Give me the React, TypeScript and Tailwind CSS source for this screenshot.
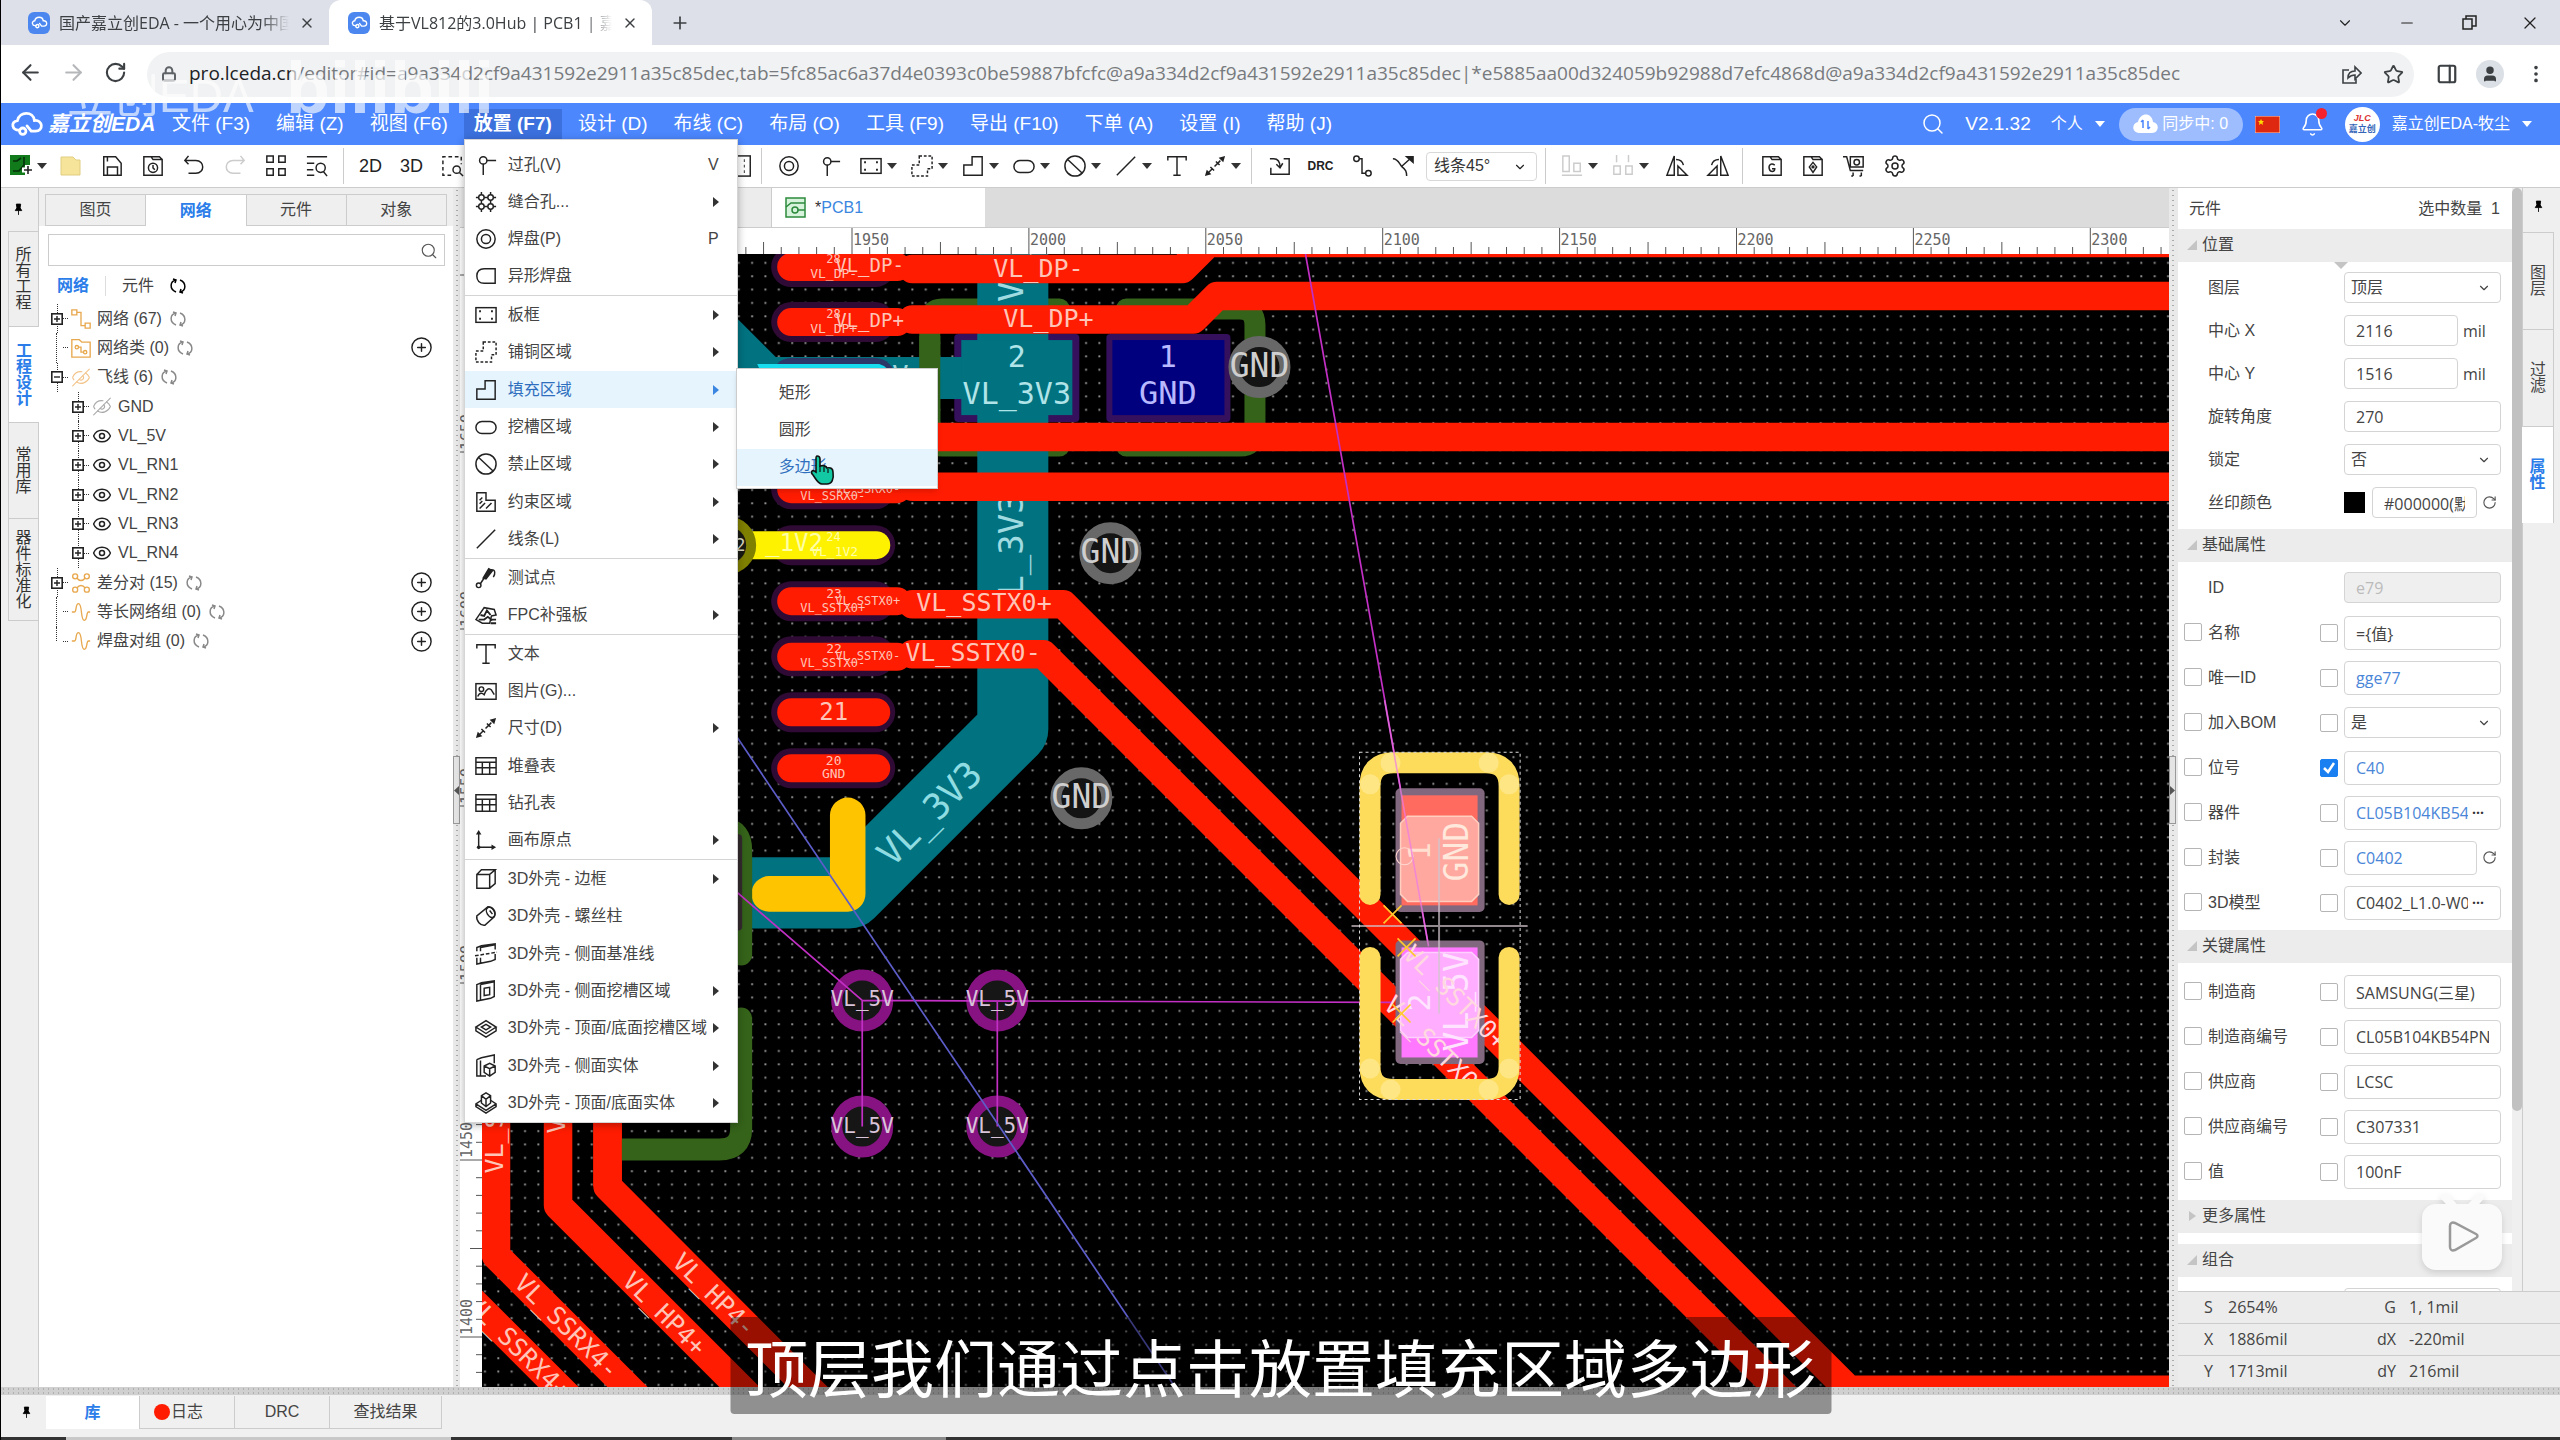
import React from "react";
import {
  ArrowLeft, ArrowRight, RotateCw, Lock, Star, X, Plus, Minus, ChevronDown, Search, Bell, MoreVertical,
  Share, PanelRight, User, Settings, CirclePlus, Eye, EyeOff,
} from "lucide-react";

const UI = "font-['Liberation_Sans','Noto_Sans_CJK_SC',sans-serif]";
const HUM = "font-['Open_Sans','Noto_Sans_CJK_SC',sans-serif]";

/* ---------- icons ---------- */

const glyphs: Record<string, React.ReactNode> = {
  via: <><circle cx="9" cy="7" r="4" /><path d="M13 7h10M9 11v12" /></>,
  stitch: <><circle cx="7" cy="7" r="3" /><circle cx="17" cy="7" r="3" /><circle cx="7" cy="17" r="3" /><circle cx="17" cy="17" r="3" /><path d="M7 1v3M17 1v3M7 10v4M17 10v4M7 20v3M17 20v3M1 7h3M1 17h3M10 7h4M10 17h4M20 7h3M20 17h3" /></>,
  pad: <><circle cx="12" cy="12" r="10" /><circle cx="12" cy="12" r="5" /></>,
  shapePad: <path d="M10 4h12v16H10C5 20 2 17 2 12s3-8 8-8z" />,
  frame: <><rect x="1" y="4" width="22" height="16" /><path d="M4.500 8h2M4.500 16h2M17.500 8h2M17.500 16h2" strokeWidth="2.200" /></>,
  copper: <path d="M9 1h14v14h-5v8H1V11h8z" strokeDasharray="3 2" />,
  fill: <path d="M11 2h11v20H2V11h9z" />,
  slot: <rect x="1" y="6" width="22" height="13" rx="6.500" />,
  forbid: <><circle cx="12" cy="12" r="11" /><path d="M4 5l16 15" /></>,
  constraint: <><path d="M12 2v8h10v12H2V2z" /><path d="M5 10l3-3M5 19l6-6M12 19l6-6M5 14l3-3" /></>,
  line: <path d="M2 22L22 2" />,
  probe: <><circle cx="4" cy="20" r="2.500" /><path d="M6 18l4-6" /><path d="M9 12l6-10 4 2-7 9z" fill="currentColor" /><path d="M17 3c6-1 5 5 3 8" /></>,
  fpc: <><path d="M1 17L10 4l11 2 2 6-5 1-2 8H8z" /><path d="M6 12l4 1 3-6 4 5M4 17h6l4-3 5 4M18 17h5M17 21h6" strokeWidth="2" /></>,
  text: <path d="M2 6V2h20v4M12 2v20M8 22h8" />,
  image: <><rect x="1" y="4" width="22" height="17" /><circle cx="7" cy="10" r="2.500" /><path d="M3 18c2-5 5-4 7-2 2-6 5-8 8-5l3 5" /></>,
  dim: <><path d="M3 21L21 3M7 13l4 4M13 7l4 4" strokeDasharray="9 3" /><path d="M1 23l2-7 5 5zM23 1l-2 7-5-5z" fill="currentColor" stroke="none" /></>,
  table: <><rect x="1" y="3" width="22" height="18" /><path d="M1 8h22M1 14h22M8 8v13M16 8v13" /></>,
  origin: <><path d="M4 3v17h17" /><path d="M1 6l3-5 3 5zM18 17l5 3-5 3z" fill="currentColor" stroke="none" /><circle cx="4" cy="20" r="2" fill="currentColor" stroke="none" /></>,
  box: <><path d="M2 7h14v15H2zM2 7l5-5h15l-6 5M22 2v15l-6 5" /></>,
  screw: <><path d="M14 2L2 12c-1 5 4 11 9 10l10-9c3-6-2-11-7-11z" /><ellipse cx="17" cy="8" rx="4" ry="6" transform="rotate(-30 17 8)" /><path d="M16 6l3 4" /></>,
  sideLine: <><path d="M2 9V5l5-2 15-2v6M2 16v7l15-3 5-2v-6M6 9V5l16-3M6 16v6" /><path d="M0 14l24-4" strokeDasharray="4 2" /></>,
  sideSlot: <><path d="M2 5l5-2 14-2v17l-4 2-15 3zM6 5l15-3M6 5v17" /><path d="M10 9l6-1v8l-6 1z" /></>,
  topSlot: <><path d="M12 4l11 7-11 7L1 11zM1 11v4l11 7 11-7v-4" /><path d="M12 8l5 3-5 3-5-3z" /></>,
  sideSolid: <><path d="M2 5l5-2 14-3v9M2 5v18h10M6 6v17" /><path d="M10 12l6-3 6 3v7l-6 4-6-4zM10 12l6 3 6-3M16 15v8" /></>,
  topSolid: <><path d="M7 9l-6 4v3l11 7 11-7v-3l-6-4M1 13l11 7 11-7" /><path d="M12 1l5 3v8l-5 4-5-4V4zM7 4l5 4 5-4M12 8v8" /></>,
  save: <path d="M3 2h13l6 7v13H3zM7 22v-9h11v9M7 2v5" />,
  history: <><path d="M2 2h8l2 3h10v17H2zM10 2h9l3 3" /><circle cx="12" cy="14" r="5" /><path d="M12 11v3l2 2" /></>,
  undo: <path d="M6 1L2 6l4 4M2 6h12c10 0 10 14 0 14H6" />,
  grid: <path d="M2 1h7v7H2zM15 1h7v7h-7zM2 15h7v7H2zM15 15h7v7h-7z" />,
  find: <><path d="M1 2h22M1 9h8M1 16h7M1 22h8" /><circle cx="16" cy="14" r="5" /><path d="M19 18l4 5" /></>,
  zoomBox: <><path d="M10 22H1V2h20v8" strokeDasharray="4 3" /><circle cx="16" cy="16" r="4" /><path d="M19 19l4 4" /></>,
  panel: <><rect x="3" y="1" width="18" height="22" /><path d="M14 6h1M14 12h1M14 18h1" strokeWidth="3" /></>,
  imp: <path d="M2 14v7h20V4h-6M1 4h4c5 0 7 3 7 9M8 10l4 4 3-5" />,
  route: <><circle cx="6" cy="4" r="3" /><circle cx="19" cy="20" r="3" /><path d="M9 4h3v16h4" /></>,
  branch: <><path d="M1 4c6 0 7 6 10 9 4 3 5 5 5 10M11 12l10-9" /><path d="M16 2h7v6z" fill="currentColor" /></>,
  alignB: <path d="M2 1h7v17H2zM14 9h7v9h-7zM1 22h22" />,
  dist: <path d="M5 0v8M18 0v8M2 12h7v9H2zM15 12h7v9h-7z" />,
  mirrorL: <path d="M9 1v21H1zM13 22h10L13 12zM11 5c5 0 7 2 8 6" />,
  mirrorR: <path d="M15 1v21h8zM11 22H1l10-10zM13 5C8 5 6 7 5 11" />,
  folderG: <><path d="M2 2h8l2 3h10v17H2zM10 2h9l3 3" /><path d="M15 11c-4-3-7 0-6 4 1 4 6 4 6 0h-3" /></>,
  folderP: <><path d="M2 2h8l2 3h10v17H2zM10 2h9l3 3" /><path d="M12 8l4 5-4 6-4-6z" /><circle cx="12" cy="13" r="1" /></>,
  cart: <><path d="M0 2h4l4 15h14M8 2h14v11H8zM9 23h2M18 23h2M11 19v4M20 19v4" /><circle cx="15" cy="8" r="3" /></>,
  net: <path d="M1 1h6v6H1zM17 17h6v6h-6zM7 4h5v16h5" />,
  netClass: <><path d="M1 2h9l3 3h10v18H1z" /><circle cx="7" cy="11" r="2" /><circle cx="17" cy="17" r="2" /><path d="M9 11h3v6h3" /></>,
  diff: <><circle cx="5" cy="4" r="3" /><circle cx="19" cy="4" r="3" /><circle cx="5" cy="20" r="3" /><circle cx="19" cy="20" r="3" /><path d="M7 6c3 4 7 4 10 0M7 18c3-4 7-4 10 0" /></>,
  wave: <path d="M1 12h3c3 0 1-10 5-10 5 0 2 20 7 20 4 0 2-10 5-10h2" />,
  pin: <path d="M8 2h8l-1 7 3 5H6l3-5zM12 14v8" fill="currentColor" />,
};

function G({ n, size = 22, className = "", w = 1.6 }: { n: string; size?: number; className?: string; w?: number }) {
  return (
    <svg width={size} height={size} viewBox="0 0 24 24" fill="none" stroke="currentColor" strokeWidth={w} overflow="visible" className={"shrink-0 " + className} aria-hidden="true">
      {glyphs[n]}
    </svg>
  );
}

function Caret({ className = "text-[#333]" }: { className?: string }) {
  return <svg width="10" height="6" viewBox="0 0 10 6" className={"shrink-0 " + className} aria-hidden="true"><path d="M0 0h10L5 6z" fill="currentColor" /></svg>;
}

function CloudMark({ className = "" }: { className?: string }) {
  return (
    <svg viewBox="0 0 32 24" fill="none" stroke="currentColor" strokeWidth="2.600" strokeLinecap="round" className={className} aria-hidden="true">
      <path d="M9 18C2 19 0 10 7 9c2-9 15-9 16 0 8-1 9 10 1 10h-4l-4-5" />
      <circle cx="12" cy="19" r="3" />
    </svg>
  );
}

function Refresh({ className = "" }: { className?: string }) {
  return (
    <svg width="16" height="16" viewBox="0 0 16 16" fill="none" stroke="currentColor" strokeWidth="1.500" className={className} aria-hidden="true">
      <path d="M6 14C-1 11 0 3 6 2M3 1l3 1-1 3M10 2c7 3 6 11 0 12M13 15l-3-1 1-3" />
    </svg>
  );
}

/* ---------- browser frame ---------- */

function BrowserTab({ title, active }: { title: string; active?: boolean }) {
  return (
    <div className={"flex h-[45px] items-center pr-3 pl-[19px] " + (active ? "w-[323px] rounded-t-xl bg-white" : "w-[320px]")}>
      <span className="flex size-[22px] shrink-0 items-center justify-center rounded-md bg-[#4c87f0]"><CloudMark className="w-[17px] text-white" /></span>
      <span className="ml-[9px] flex-1 overflow-hidden whitespace-nowrap [mask-image:linear-gradient(to_right,black_88%,transparent)]">{title}</span>
      <button aria-label="关闭标签页" className="ml-2 flex size-5 items-center justify-center"><X size={16} strokeWidth={2} /></button>
    </div>
  );
}

const URL_PATH = "/editor#id=a9a334d2cf9a431592e2911a35c85dec,tab=5fc85ac6a37d4e0393c0be59887bfcfc@a9a334d2cf9a431592e2911a35c85dec|*e5885aa00d324059b92988d7efc4868d@a9a334d2cf9a431592e2911a35c85dec";

function Browser() {
  return (
    <header className={HUM + " text-[#3c4043]"}>
      <div className="flex h-[45px] items-center bg-[#dde0e8] pl-2 text-[16px]">
        <BrowserTab title="国产嘉立创EDA - 一个用心为中国人" />
        <BrowserTab title="基于VL812的3.0Hub | PCB1 | 嘉立创" active />
        <button aria-label="新标签页" className="ml-[18px]"><Plus size={20} /></button>
        <div className="ml-auto flex h-10 items-center text-[#222]">
          <button aria-label="搜索标签页" className="flex w-[62px] justify-center"><ChevronDown size={18} strokeWidth={1.5} /></button>
          <button aria-label="最小化" className="flex w-[62px] justify-center"><Minus size={18} strokeWidth={1.5} /></button>
          <button aria-label="还原" className="flex w-[62px] justify-center">
            <svg width="15" height="15" viewBox="0 0 15 15" fill="none" stroke="currentColor" strokeWidth="1.500"><path d="M1 4h9v10H1zM4 4V1h10v10h-4" /></svg>
          </button>
          <button aria-label="关闭" className="flex w-[60px] justify-center"><X size={20} strokeWidth={1.5} /></button>
        </div>
      </div>
      <div className="flex h-[58px] items-center bg-white pb-1">
        <button aria-label="后退" className="ml-[17px] w-[43px]"><ArrowLeft size={25} strokeWidth={2} /></button>
        <button aria-label="前进" className="w-[43px] text-[#b5b7ba]"><ArrowRight size={25} strokeWidth={2} /></button>
        <button aria-label="刷新" className="w-[43px]"><RotateCw size={23} strokeWidth={2.2} /></button>
        <div className="mt-1 flex h-[45px] flex-1 items-center rounded-full bg-[#f1f2f3] pl-[14px]">
          <Lock size={16} strokeWidth={3} className="shrink-0 text-[#5f6368]" />
          <div className="ml-[12px] flex-1 overflow-hidden pb-[2px] text-[19px] whitespace-nowrap text-[#777a7e]"><span className="text-[#202124]">pro.lceda.cn</span>{URL_PATH}</div>
          <button aria-label="分享" className="flex w-[42px] justify-center">
            <svg width="21" height="21" viewBox="0 0 21 21" fill="none" stroke="currentColor" strokeWidth="1.600"><path d="M8 6H2v13h13v-4M7 14c0-5 3-7 7-7V3l6 6-6 6v-4c-3 0-5 1-7 3z" /></svg>
          </button>
          <button aria-label="收藏" className="flex w-[42px] justify-center"><Star size={21} /></button>
        </div>
        <div className="mt-1 flex items-center">
          <button aria-label="侧边栏" className="ml-[12px] flex w-[42px] justify-center"><PanelRight size={22} strokeWidth={2.4} /></button>
          <button aria-label="用户" className="mx-2 flex size-7 items-center justify-center rounded-full bg-[#dbe0e6]"><User size={18} fill="currentColor" /></button>
          <button aria-label="更多" className="flex w-12 justify-center"><MoreVertical size={22} /></button>
        </div>
      </div>
    </header>
  );
}

/* ---------- place menu ---------- */

type Item = { icon: string; label: string; key?: string; sub?: boolean; on?: boolean };
const placeGroups: { h: string; items: Item[] }[] = [
  { h: "h-[150px]", items: [
    { icon: "via", label: "过孔(V)", key: "V" }, { icon: "stitch", label: "缝合孔...", sub: true },
    { icon: "pad", label: "焊盘(P)", key: "P" }, { icon: "shapePad", label: "异形焊盘" },
  ] },
  { h: "h-[263px]", items: [
    { icon: "frame", label: "板框", sub: true }, { icon: "copper", label: "铺铜区域", sub: true },
    { icon: "fill", label: "填充区域", sub: true, on: true }, { icon: "slot", label: "挖槽区域", sub: true },
    { icon: "forbid", label: "禁止区域", sub: true }, { icon: "constraint", label: "约束区域", sub: true },
    { icon: "line", label: "线条(L)", sub: true },
  ] },
  { h: "h-[76px]", items: [{ icon: "probe", label: "测试点" }, { icon: "fpc", label: "FPC补强板", sub: true }] },
  { h: "h-[225px]", items: [
    { icon: "text", label: "文本" }, { icon: "image", label: "图片(G)..." }, { icon: "dim", label: "尺寸(D)", sub: true },
    { icon: "table", label: "堆叠表" }, { icon: "table", label: "钻孔表" }, { icon: "origin", label: "画布原点", sub: true },
  ] },
  { h: "h-[262px]", items: [
    { icon: "box", label: "3D外壳 - 边框", sub: true }, { icon: "screw", label: "3D外壳 - 螺丝柱" },
    { icon: "sideLine", label: "3D外壳 - 侧面基准线" }, { icon: "sideSlot", label: "3D外壳 - 侧面挖槽区域", sub: true },
    { icon: "topSlot", label: "3D外壳 - 顶面/底面挖槽区域", sub: true }, { icon: "sideSolid", label: "3D外壳 - 侧面实体", sub: true },
    { icon: "topSolid", label: "3D外壳 - 顶面/底面实体", sub: true },
  ] },
];

function Submenu() {
  return (
    <ul className="absolute -top-[3px] left-[271px] w-[202px] border border-[#ccc] bg-white pt-[6px] pb-[2px] text-[#444] shadow-md">
      {["矩形", "圆形", "多边形"].map((t, i) => (
        <li key={t}>
          <button className={"block h-[37px] w-full pl-[42px] text-left " + (i === 2 ? "bg-[#e6f4fd] text-[#2f6fbd]" : "")}>{t}</button>
        </li>
      ))}
      <li className="absolute top-[86px] left-[72px]" aria-hidden="true">
        <svg width="26" height="30" viewBox="0 0 26 30"><path d="M8 1c2 0 3 1 3 3v7c4-1 6 0 7 2 4-1 6 1 6 4 1 7-1 12-6 12h-5c-4 0-6-5-9-9-3-3-1-6 3-3V4c0-2 0-3 1-3z" fill="#12c9a4" stroke="#111" strokeWidth="1.600" /><path d="M11 11v6M15 12v5M19 14v4" stroke="#111" strokeWidth="1.200" /></svg>
      </li>
    </ul>
  );
}

function PlaceMenu() {
  return (
    <div className="absolute top-full left-0 z-30 w-[274px] border border-[#d5d5d5] bg-white pt-[6px] text-[16px] font-normal text-[#444] shadow-[0_2px_8px_rgba(0,0,0,0.3)]">
      {placeGroups.map((g, i) => (
        <ul key={i} className={"grid auto-rows-fr " + g.h + (i < 4 ? " border-b border-[#d4d4d4]" : "")}>
          {g.items.map((m) => (
            <li key={m.label + m.icon} className={"relative " + (m.on ? "bg-[#e6f4fd] text-[#2f6fbd]" : "")}>
              <button className="flex h-full w-full items-center pr-[18px] pl-[10px] whitespace-nowrap">
                <G n={m.icon} size={22} className="text-[#222]" />
                <span className="ml-[11px]">{m.label}</span>
                {m.key && <span className="ml-auto">{m.key}</span>}
                {m.sub && <svg width="6" height="10" viewBox="0 0 6 10" className={"ml-auto shrink-0 " + (m.on ? "text-[#3a86e0]" : "text-[#333]")}><path d="M0 0v10l6-5z" fill="currentColor" /></svg>}
              </button>
              {m.on && <Submenu />}
            </li>
          ))}
        </ul>
      ))}
    </div>
  );
}

const topMenus = ["文件 (F3)", "编辑 (Z)", "视图 (F6)", "放置 (F7)", "设计 (D)", "布线 (C)", "布局 (O)", "工具 (F9)", "导出 (F10)", "下单 (A)", "设置 (I)", "帮助 (J)"];

function MenuBar() {
  return (
    <nav className="flex h-[42px] items-center bg-[#4c87fe] text-[19px] text-white">
      <CloudMark className="ml-[9px] w-[34px]" />
      <span className="ml-1 w-[110px] text-[21px] font-bold whitespace-nowrap italic">嘉立创EDA</span>
      <ul className="ml-1 flex gap-[6px] whitespace-nowrap">
        {topMenus.map((t, i) => (
          <li key={t} className="relative">
            <button className={"h-[30px] px-[10px] " + (i === 3 ? "bg-[#3b70dd] font-bold" : "")}>{t}</button>
            {i === 3 && <PlaceMenu />}
          </li>
        ))}
      </ul>
      <div className="ml-auto flex items-center whitespace-nowrap">
        <button aria-label="搜索"><Search size={24} strokeWidth={1.5} /></button>
        <span className="ml-5">V2.1.32</span>
        <button className="ml-5 flex items-center gap-3 text-[16px]">个人 <Caret className="text-white" /></button>
        <button className="ml-[14px] flex h-[33px] w-[124px] items-center justify-center gap-1 rounded-full bg-[#9dbdff] text-[16px]">
          <svg width="25" height="20" viewBox="0 0 25 20"><path d="M6 19C-2 18-1 9 5 8 7-2 19-2 20 8c7 1 6 11-1 11z" fill="#fff" /><path d="M10 6v8M8 8l2-2M15 7v8M17 13l-2 2" stroke="#4c87fe" strokeWidth="1.500" fill="none" /></svg>
          同步中: 0
        </button>
        <svg width="25" height="17" viewBox="0 0 25 17" className="ml-3"><rect width="25" height="17" fill="#de2910" stroke="#f0d0c0" /><path d="M6 3l1 2h2L7.500 6.500 8 9 6 7.500 4 9l.5-2.500L3 5h2z" fill="#ffde00" /></svg>
        <button aria-label="通知" className="relative ml-5"><Bell size={25} strokeWidth={1.5} /><i className="absolute -top-1 right-[-2px] size-[11px] rounded-full bg-[#f5222d]" /></button>
        <span className="ml-5 flex size-[35px] flex-col items-center justify-center rounded-full bg-white text-[9px] leading-[11px] font-bold text-[#3566b8]"><i className="text-[#d33]">JLC</i>嘉立创</span>
        <button className="mr-7 ml-[12px] flex items-center gap-3 text-[16px]">嘉立创EDA-牧尘 <Caret className="text-white" /></button>
      </div>
    </nav>
  );
}

/* ---------- tool bar ---------- */

function Tool({ n, label }: { n: string; label: string }) {
  return <button aria-label={label} className="flex w-[41px] shrink-0 justify-center text-[#222]"><G n={n} /></button>;
}
function DropTool({ n, label, dim }: { n: string; label: string; dim?: boolean }) {
  return <button aria-label={label} className="flex w-[51px] shrink-0 items-center gap-[5px] pl-1"><G n={n} className={dim ? "text-[#ccc]" : "text-[#222]"} /><Caret /></button>;
}
const Bar = ({ className = "" }: { className?: string }) => <i className={"h-9 w-px shrink-0 bg-[#ccc] " + className} />;

function Toolbar() {
  return (
    <div className="flex h-[42px] shrink-0 items-center bg-white text-[#222]">
      <button aria-label="新建" className="flex w-[49px] items-center gap-[3px] pl-[9px]">
        <svg width="24" height="22" viewBox="0 0 24 22"><path d="M0 0h20v20H0z" fill="#117a1b" /><path d="M3 16h6l5-6V2M3 6h4l4-3" stroke="#04310a" fill="none" strokeWidth="1.600" /><path d="M12 15h11M17.500 10v11" stroke="#fff" strokeWidth="5" /><path d="M14 15h8M18 11v8" stroke="#222" strokeWidth="1.600" /></svg>
        <Caret />
      </button>
      <button aria-label="打开" className="flex w-[41px] justify-center"><svg width="21" height="20" viewBox="0 0 21 20"><path d="M1 1h12l3 3h4v15H1z" fill="#f6e49a" stroke="#e0cd80" /></svg></button>
      <Tool n="save" label="保存" /><Tool n="history" label="历史" /><Tool n="undo" label="撤销" />
      <button aria-label="重做" className="flex w-[41px] justify-center text-[#ccc]"><G n="undo" className="-scale-x-100" /></button>
      <Tool n="grid" label="元件库" /><Tool n="find" label="查找" />
      <Bar className="mx-[6px]" />
      <button className="w-[41px] text-[18px]">2D</button>
      <button className="w-[41px] text-[18px]">3D</button>
      <Tool n="zoomBox" label="框选缩放" />
      <div className="flex w-[288px] justify-end pr-2"><G n="panel" /></div>
      <Bar className="mr-[6px]" />
      <Tool n="pad" label="焊盘" /><Tool n="via" label="过孔" />
      <i className="w-[6px]" />
      <DropTool n="frame" label="板框" /><DropTool n="copper" label="铺铜" /><DropTool n="fill" label="填充" /><DropTool n="slot" label="挖槽" /><DropTool n="forbid" label="禁止" /><DropTool n="line" label="线条" />
      <button aria-label="文本" className="mr-2 flex w-[30px] justify-center"><G n="text" /></button>
      <DropTool n="dim" label="尺寸" />
      <Bar className="mr-[7px]" />
      <Tool n="imp" label="导入变更" />
      <button className="w-[41px] text-[12px] font-bold">DRC</button>
      <Tool n="route" label="单路布线" /><Tool n="branch" label="差分布线" />
      <div className="relative ml-[3px]">
        <select aria-label="布线拐角" className="h-[29px] w-[111px] appearance-none rounded-sm border border-[#d8d8d8] bg-white pl-[7px] text-[16px] text-[#333]"><option>线条45°</option></select>
        <ChevronDown size={14} className="pointer-events-none absolute top-2 right-[10px]" />
      </div>
      <Bar className="mr-[11px] ml-2" />
      <DropTool n="alignB" label="对齐" dim /><DropTool n="dist" label="分布" dim />
      <div className="-ml-[3px] flex"><Tool n="mirrorL" label="左旋转" /><Tool n="mirrorR" label="右旋转" /></div>
      <Bar className="mr-2 ml-1" />
      <Tool n="folderG" label="导出Gerber" /><Tool n="folderP" label="导出坐标" /><Tool n="cart" label="下单" />
      <button aria-label="设置" className="flex w-[41px] justify-center"><Settings size={24} strokeWidth={1.5} /></button>
    </div>
  );
}

/* ---------- left side ---------- */

function SideTabs() {
  const t = [["所有工程", "h-[95px]"], ["工程设计", "h-[96px]"], ["常用库", "h-[96px]"], ["器件标准化", "h-[103px]"]];
  return (
    <div className="flex w-[38px] shrink-0 flex-col border-r border-[#ccc] bg-[#efefef] pl-[7px]">
      <div className="flex h-[43px] items-center justify-center pr-[9px] text-black"><G n="pin" size={13} /></div>
      {t.map(([s, h], i) => (
        <button key={s} className={"flex items-center justify-center border-t border-l border-[#ccc] text-[16px] leading-[16px] " + h + (i === 1 ? " -mr-px bg-white font-bold text-[#2b7de9]" : " text-[#333]") + (i === 3 ? " border-b" : "")}>
          <span className="w-4 break-all">{s}</span>
        </button>
      ))}
    </div>
  );
}

type Row = { label: string; icon: string; box?: "+" | "-"; child?: boolean; add?: boolean };
const tree: Row[] = [
  { label: "网络 (67)", icon: "net", box: "+" }, { label: "网络类 (0)", icon: "netClass", add: true }, { label: "飞线 (6)", icon: "hide", box: "-" },
  { label: "GND", icon: "hideGray", box: "+", child: true }, { label: "VL_5V", icon: "eye", box: "+", child: true },
  { label: "VL_RN1", icon: "eye", box: "+", child: true }, { label: "VL_RN2", icon: "eye", box: "+", child: true },
  { label: "VL_RN3", icon: "eye", box: "+", child: true }, { label: "VL_RN4", icon: "eye", box: "+", child: true },
  { label: "差分对 (15)", icon: "diff", box: "+", add: true }, { label: "等长网络组 (0)", icon: "wave", add: true }, { label: "焊盘对组 (0)", icon: "wave", add: true },
];

function TreeIcon({ n }: { n: string }) {
  if (n === "eye") return <Eye size={22} strokeWidth={1.8} className="text-[#222]" />;
  if (n === "hide") return <EyeOff size={21} strokeWidth={1.3} className="-scale-x-100 text-[#f3c48a]" />;
  if (n === "hideGray") return <EyeOff size={21} strokeWidth={1.3} className="-scale-x-100 text-[#aaa]" />;
  return <G n={n} size={20} className="text-[#e8a84e]" />;
}

function LeftPanel() {
  return (
    <section className="flex w-[414px] shrink-0 flex-col bg-white text-[16px] text-[#444]">
      <div className="flex h-[38px] items-end bg-[#efefef] px-[6px]">
        {["图页", "网络", "元件", "对象"].map((t, i) => (
          <button key={t} className={"h-[32px] flex-1 border-t border-r border-[#ccc] " + (i === 1 ? "bg-white font-bold text-[#2b7de9]" : "border-b bg-[#efefef]") + (i === 0 ? " border-l" : "")}>{t}</button>
        ))}
      </div>
      <div className="relative mt-2 mr-[8px] ml-[9px]">
        <input aria-label="搜索网络" className="block h-[32px] w-full border border-[#ccc] px-2" />
        <Search size={18} strokeWidth={1.5} className="absolute top-2 right-[7px] text-[#555]" />
      </div>
      <div className="mt-[6px] flex h-[28px] items-center pl-[18px]">
        <button className="font-bold text-[#2b7de9]">网络</button>
        <i className="mx-4 h-5 w-px bg-[#ddd]" />
        <button>元件</button>
        <button aria-label="刷新" className="ml-4 text-black"><Refresh /></button>
      </div>
      <ul className="mt-1 grid h-[352px] auto-rows-fr">
        {tree.map((r, i) => (
          <li key={r.label} className={"flex items-center pr-[20px] " + (r.child ? "pl-[33px]" : "pl-[12px]")}>
            {r.box ? (
              <span className="relative flex h-full w-[12px] items-center justify-center before:absolute before:inset-y-0 before:left-[6px] before:border-l before:border-dotted before:border-[#333]">
                <svg width="12" height="12" viewBox="0 0 12 12" className="relative"><rect x="0.800" y="0.800" width="10.400" height="10.400" fill="#fff" stroke="#222" strokeWidth="1.600" /><path d={r.box === "+" ? "M3 6h6M6 3v6" : "M3 6h6"} stroke="#222" strokeWidth="1.400" /></svg>
              </span>
            ) : (
              <span className={"ml-[5px] w-[7px] self-start border-l border-dotted border-[#333] " + (i === 11 ? "h-[14px]" : "h-full")} />
            )}
            <span className="w-[5px] border-t border-dotted border-[#333]" />
            <button aria-label="显示" className="ml-[3px] flex w-5 shrink-0 justify-center"><TreeIcon n={r.icon} /></button>
            <span className="ml-[6px] whitespace-nowrap">{r.label}</span>
            {!r.child && <Refresh className="ml-2 text-[#888]" />}
            {r.add && <button aria-label="添加" className="ml-auto"><CirclePlus size={23} strokeWidth={1.5} className="text-[#222]" /></button>}
          </li>
        ))}
      </ul>
    </section>
  );
}

function Splitter({ dir }: { dir: "l" | "r" }) {
  return (
    <div className={"relative shrink-0 bg-[#e9e9e9] bg-[radial-gradient(#aaa_1px,transparent_1px)] bg-[size:8px_5px] " + (dir === "l" ? "w-[7px]" : "w-[9px]")}>
      <button aria-label="折叠面板" className="absolute top-[568px] flex h-[68px] w-[7px] items-center justify-center border border-[#999] bg-[#e4e4e4]">
        <svg width="5" height="9" viewBox="0 0 5 9" className={dir === "l" ? "-scale-x-100" : ""}><path d="M0 0v9l5-4.500z" fill="#555" /></svg>
      </button>
    </div>
  );
}

/* ---------- board ---------- */

const range = (a: number, b: number, s: number) => Array.from({ length: Math.floor((b - a) / s) + 1 }, (_, i) => a + i * s);

function RulerX() {
  return (
    <svg className="h-[26px] w-full bg-white font-['DejaVu_Sans_Mono',monospace] text-[15px]" stroke="#555">
      {range(1845, 2330, 5).map((v) => {
        const x = 370 + (v - 1950) * 3.538;
        return <path key={v} d={`M${x} 26V${v % 50 === 0 ? 0 : v % 25 === 0 ? 14 : 19}`} />;
      })}
      {range(1850, 2300, 50).map((v) => <text key={v} x={371 + (v - 1950) * 3.538} y="17" fill="#666" stroke="none">{v}</text>)}
    </svg>
  );
}

function RulerY() {
  return (
    <svg className="h-full w-[22px] shrink-0 bg-white font-['DejaVu_Sans_Mono',monospace] text-[15px]" stroke="#555">
      {range(1315, 1700, 5).map((v) => {
        const y = 906 + (1450 - v) * 3.54;
        return <path key={v} d={`M22 ${y}H${v % 50 === 0 ? 0 : v % 25 === 0 ? 10 : 16}`} />;
      })}
      {range(1350, 1650, 50).map((v) => {
        const y = 904 + (1450 - v) * 3.54;
        return <text key={v} x="12" y={y} transform={`rotate(-90 12 ${y})`} fill="#666" stroke="none">{v}</text>;
      })}
    </svg>
  );
}

const T = ({ x, y, s, r = 0, c = "#ffc4b8", m, children }: { x: number; y: number; s: number; r?: number; c?: string; m?: boolean; children: string }) => (
  <text x={x} y={y} fontSize={s} fill={c} transform={r ? `rotate(${r} ${x} ${y})` : undefined} textAnchor={m ? "middle" : "start"}>{children}</text>
);

function Board() {
  const padRows = [267, 322, 378, 489, 545, 601, 656, 712, 768];
  return (
    <svg className="block h-full w-full bg-black font-['DejaVu_Sans_Mono',monospace]" viewBox="483 254 1686 1133" preserveAspectRatio="xMinYMin slice" role="img" aria-label="PCB1">
      <defs>
        <pattern id="dots" x="746" y="282.600" width="13.350" height="13.350" patternUnits="userSpaceOnUse"><rect x="6" y="6" width="1.900" height="1.900" fill="#979797" /></pattern>
      </defs>
      <rect x="483" y="254" width="1686" height="1133" fill="url(#dots)" />

      <g fill="none" stroke="#35631a" strokeWidth="21" strokeLinecap="round">
        <path d="M1060 309H943Q930.500 309 930.500 322V433Q930.500 446 943 446H1060" />
        <path d="M1127 309H1240Q1255.500 309 1255.500 325V430Q1255.500 446 1240 446H1127" />
      </g>
      <rect x="955" y="334" width="125" height="88" rx="4" fill="#35105c" />
      <rect x="1107" y="334" width="124" height="88" rx="4" fill="#35105c" />
      <rect x="1113" y="340" width="112" height="75" fill="#00007e" />
      <g fill="none" stroke="#007280">
        <path d="M1013.500 250V729L850 892.500H730" strokeWidth="71" strokeLinejoin="round" />
        <path d="M720 330L768 378H965" strokeWidth="42" />
      </g>
      <rect x="962" y="340" width="111" height="75" fill="#007280" />
      <path d="M930.500 336V446" stroke="#35631a" strokeWidth="21" />

      {padRows.map((y) => <rect key={y} x="772" y={y - 20} width="124" height="40" rx="20" fill={y === 378 ? "#2b3868" : "#2f0a35"} />)}
      <path d="M758 364H880q11 3 11 14H765z" fill="#16dcee" />
      <T x={1024} y={616} s={34} r={-90} c="#9fdbe0">VL_3V3</T>
      <T x={1024} y={302} s={34} r={-90} c="#9fdbe0">VL_3V3</T>
      <T x={939} y={822} s={36} r={-45} c="#8fdde2" m>VL_3V3</T>
      <T x={893} y={385} s={27} c="#9fdbe0">V</T>

      <g fill="none" stroke="#ff1c00" strokeLinejoin="round" strokeLinecap="round">
        <path d="M792 267H898M792 322H898M792 489H898M792 601H898M792 656.500H898" strokeWidth="28" />
        <path d="M792 712H877M792 768H877" strokeWidth="28" />
        <g strokeWidth="28.500">
          <path d="M913 269H1183L1209 243H2180" />
          <path d="M913 319.500H1194L1217.500 296H2180" />
          <path d="M913 437H2180M913 486.500H2180" />
          <path d="M913 604H1064L1849 1389H2180" />
          <path d="M913 654H1044L1790 1400" />
          <path d="M497 1100V1255L640 1398M559 1100V1205L754 1400M608.500 1100V1186L822 1400M465 1292L575 1402" />
        </g>
      </g>
      <path d="M740 545H877" stroke="#fff200" strokeWidth="28" strokeLinecap="round" />
      <circle cx="728" cy="545" r="24" fill="#1a1a14" stroke="#808000" strokeWidth="10" />
      <T x={726} y={551} s={17} c="#d8d8c0">V2</T>
      <T x={766} y={551} s={24} c="#ffffa8">_1V2</T>
      <T x={827} y={541} s={12} c="#ffffa8">24</T>
      <T x={812} y={556} s={13} c="#ffffa8">VL_1V2</T>

      {[[267, "28", "VL_DP-"], [322, "28", "VL_DP+"]].map(([y, a, b]) => (
        <g key={b}><T x={827} y={Number(y) - 4} s={12}>{String(a)}</T><T x={811} y={Number(y) + 11} s={13}>{String(b)}</T><T x={836} y={Number(y) + 5} s={19}>{String(b)}</T></g>
      ))}
      {[[489, "25", "VL_SSRX0-"], [601, "23", "VL_SSTX0+"], [656, "22", "VL_SSTX0-"]].map(([y, a, b]) => (
        <g key={b}><T x={827} y={Number(y) - 3} s={13}>{String(a)}</T><T x={801} y={Number(y) + 11} s={12}>{String(b)}</T><T x={836} y={Number(y) + 4} s={12}>{String(b)}</T></g>
      ))}
      <T x={834.5} y={720} s={24} m>21</T>
      <T x={834.5} y={765} s={13} m>20</T><T x={834.5} y={778} s={13} m>GND</T>
      <T x={994} y={277} s={25}>VL_DP-</T><T x={1004} y={327} s={25}>VL_DP+</T>
      <T x={917} y={611} s={25}>VL_SSTX0+</T><T x={906} y={661} s={25}>VL_SSTX0-</T>

      <T x={1017.5} y={367} s={30} c="#b0e4e8" m>2</T><T x={1017.5} y={404} s={30} c="#b0e4e8" m>VL_3V3</T>
      <T x={1168.5} y={367} s={30} c="#b8b8ff" m>1</T><T x={1168.5} y={404} s={32} c="#b8b8ff" m>GND</T>

      <T x={504} y={1173} s={25} r={-90}>VL_SSRX4-</T><T x={566} y={1133} s={25} r={-90}>VL_HP4+</T>
      <T x={514} y={1284} s={25} r={45}>VL_SSRX4-</T><T x={622} y={1282} s={25} r={45}>VL_HP4+</T>
      <T x={672} y={1263} s={25} r={45}>VL_HP4-</T><T x={465} y={1305} s={25} r={45}>VL_SSRX4+</T>

      <path d="M848.500 815V893.500H770" fill="none" stroke="#ffc400" strokeWidth="35.500" strokeLinecap="round" strokeLinejoin="round" />
      <rect x="690" y="822" width="53" height="110" rx="8" fill="#332b2e" />
      <path d="M725 829Q742 829 742 850V954M623 1149H720Q742 1149 742 1128V1018" fill="none" stroke="#35631a" strokeWidth="22" strokeLinecap="round" />
      <path d="M608.500 1120V1186" stroke="#ff1c00" strokeWidth="28.500" />
      <rect x="733" y="834" width="10" height="96" rx="4" fill="#332b2e" />

      {[[1260, 367], [1111, 553], [1082, 798]].map(([x, y]) => (
        <g key={x}><circle cx={x} cy={y} r="25.500" fill="#141414" stroke="#686868" strokeWidth="11" /><T x={x} y={y + 10} s={33} c="#cfcfcf" m>GND</T></g>
      ))}

      {[[863, 1000], [998, 1000], [863, 1126], [998, 1126]].map(([x, y]) => (
        <circle key={`${x}-${y}`} cx={x} cy={y} r="25.500" fill="#161616" stroke="#861381" strokeWidth="11" />
      ))}
      <g fill="none" strokeWidth="1.700">
        <path d="M738 892L863 1000L1392 1002M863 1000V1126M998 1000V1126M1306 254L1429 946" stroke="#c22fc4" />
        <path d="M738 737L1176 1387" stroke="#5d5dca" />
      </g>
      {[[863, 1000], [998, 1000], [863, 1126], [998, 1126]].map(([x, y]) => <T key={`${x}-${y}`} x={x} y={y + 6} s={21} c="#d9c4d9" m>VL_5V</T>)}

      {[[788, 795, 816, "#ff6b5f", "#ffa8a0", "#ffcfc0", 0], [940, 947, 952, "#ff78ff", "#ffadff", "#ffd0ff", 1]].map(([b, i, l, c1, c2, c3, k]) => (
        <g key={Number(k)}>
          <rect x="1396" y={Number(b)} width="89" height="123.500" rx="5" fill="#82687f" />
          <rect x="1402" y={Number(i)} width="76" height="110" fill={String(c1)} />
          <path d={`M1408 ${l}h64l7 7v71l-7 7h-64l-7-7v-71z`} fill={String(c2)} stroke={String(c3)} strokeWidth="1.500" />
        </g>
      ))}
      <T x={1430} y={860} s={30} r={-90} c="#ffe0d0">1</T><T x={1468} y={881} s={33} r={-90} c="#ffe8dc">GND</T>
      <circle cx="1405" cy="856" r="8.500" fill="none" stroke="#ffd8d0" />
      <T x={1430} y={1011} s={30} r={-90} c="#ffe4ff">2</T><T x={1468} y={1051} s={33} r={-90} c="#ffe4ff">VL_5V</T>
      <T x={1402} y={955} s={25} r={45} c="#ffd8e0">VL_SSTX0+</T><T x={1383} y={1006} s={25} r={45} c="#ffd8e0">VL_SSTX0-</T>
      <g fill="none" stroke="#fddc5c" strokeWidth="21" strokeLinecap="round">
        <path d="M1370.500 894V786Q1370.500 762.500 1394 762.500H1486Q1509.500 762.500 1509.500 786V894" />
        <path d="M1370.500 957V1066Q1370.500 1089 1394 1089H1486Q1509.500 1089 1509.500 1066V957" />
      </g>
      {[[1391, 762.5], [1489, 762.5], [1370.5, 784], [1509.5, 784], [1391, 1089], [1489, 1089], [1370.5, 1068], [1509.5, 1068]].map(([x, y]) => <circle key={`${x},${y}`} cx={x} cy={y} r="10" fill="#ffe98f" opacity="0.800" />)}
      <path d="M1384 905l18 18M1402 905l-18 18M1398 938l18 18M1416 938l-18 18M1393 1004l18 18M1411 1004l-18 18" stroke="#ffc92e" strokeWidth="1.600" />
      <path d="M1352 925.500H1528M1439.500 838V1013" stroke="#d0c4cc" strokeWidth="2" opacity="0.700" />
      <path d="M1385 700L1429 946" stroke="#f07ae8" strokeWidth="1.600" opacity="0.700" />
      <rect x="1360" y="752" width="160.500" height="347" fill="none" stroke="#ddd" strokeDasharray="3 3" />
    </svg>
  );
}

function Editor() {
  return (
    <main className="flex min-w-0 flex-1 flex-col">
      <div className="flex h-[40px] shrink-0 border-b border-[#ccc] bg-[#dcdcdc]">
        <div className="w-[312px] border-r border-[#ccc] bg-[#ececec]" />
        <button className="flex w-[213px] items-center bg-white pl-[13px] text-[16px] text-[#3a86e0]">
          <svg width="21" height="21" viewBox="0 0 21 21" fill="#d8f3dc" stroke="#2c8a3c" strokeWidth="1.500"><rect x="1" y="1" width="19" height="19" /><path d="M1 10l5-4h14M13 13h7" fill="none" /><circle cx="10" cy="13" r="3" /></svg>
          <span className="ml-[9px]"><span className="text-[#333]">*</span>PCB1</span>
        </button>
      </div>
      <div className="flex h-[26px] shrink-0"><i className="w-[22px] shrink-0 bg-white" /><RulerX /></div>
      <div className="flex min-h-0 flex-1"><RulerY /><div className="min-w-0 flex-1"><Board /></div></div>
    </main>
  );
}

/* ---------- properties ---------- */

const field = "h-full w-full min-w-0 rounded-sm border border-[#d4d4d4] bg-white text-[16px]";
const tick = "size-[18px] shrink-0 appearance-none rounded-xs border border-[#b5b5b5] bg-white";

type Prop = { label: string; value: string; kind?: "select" | "unit" | "color" | "off" | "more" | "reload"; boxes?: boolean; blue?: boolean; checked?: boolean };
const place: Prop[] = [
  { label: "图层", value: "顶层", kind: "select" }, { label: "中心 X", value: "2116", kind: "unit" }, { label: "中心 Y", value: "1516", kind: "unit" },
  { label: "旋转角度", value: "270" }, { label: "锁定", value: "否", kind: "select" }, { label: "丝印颜色", value: "#000000(默认)", kind: "color" },
];
const basic: Prop[] = [
  { label: "ID", value: "e79", kind: "off" }, { label: "名称", value: "={值}", boxes: true }, { label: "唯一ID", value: "gge77", boxes: true, blue: true },
  { label: "加入BOM", value: "是", kind: "select", boxes: true }, { label: "位号", value: "C40", boxes: true, blue: true, checked: true },
  { label: "器件", value: "CL05B104KB54PNC", kind: "more", boxes: true, blue: true }, { label: "封装", value: "C0402", kind: "reload", boxes: true, blue: true },
  { label: "3D模型", value: "C0402_L1.0-W0.5", kind: "more", boxes: true },
];
const keyProps: Prop[] = [
  { label: "制造商", value: "SAMSUNG(三星)", boxes: true }, { label: "制造商编号", value: "CL05B104KB54PNC", boxes: true }, { label: "供应商", value: "LCSC", boxes: true },
  { label: "供应商编号", value: "C307331", boxes: true }, { label: "值", value: "100nF", boxes: true },
];

function PropRow({ p, h, fh }: { p: Prop; h: string; fh: string }) {
  const id = React.useId();
  const tone = p.blue ? "text-[#4a86d8]" : "text-[#444]";
  const short = p.kind === "reload" || p.kind === "color";
  return (
    <div className={"flex items-center pl-[6px] " + h}>
      <span className="w-6 shrink-0">{p.boxes && <input type="checkbox" aria-label={p.label + "显示名称"} className={tick + " mt-[5px]"} />}</span>
      <label htmlFor={id} className="w-[112px] shrink-0 whitespace-nowrap">{p.label}</label>
      <span className="flex w-6 shrink-0 items-center">
        {p.boxes && (
          <span className="relative flex">
            <input type="checkbox" aria-label={p.label + "显示值"} defaultChecked={p.checked} className={tick + " checked:border-[#1a7ff0] checked:bg-[#1a7ff0]"} />
            {p.checked && <svg width="18" height="18" viewBox="0 0 18 18" fill="none" stroke="#fff" strokeWidth="2.500" className="pointer-events-none absolute"><path d="M4 9l4 4 6-9" /></svg>}
          </span>
        )}
      </span>
      <div className={"relative flex w-[157px] items-center " + (p.kind === "select" ? UI : HUM) + " " + fh}>
        {p.kind === "color" && <i className="mr-[7px] size-[21px] shrink-0 bg-black" />}
        {p.kind === "select" ? (
          <>
            <select id={id} className={field + " appearance-none pl-[6px]"}><option>{p.value}</option></select>
            <ChevronDown size={14} className="pointer-events-none absolute right-[10px]" />
          </>
        ) : (
          <input id={id} defaultValue={p.value} disabled={p.kind === "off"} className={field + " pl-[11px] " + tone + (p.kind === "more" ? " pr-8" : " pr-[11px]") + " disabled:bg-[#efefef] disabled:text-[#bbb]"} />
        )}
        {p.kind === "more" && <button aria-label="选择" className="absolute right-[17px] text-[14px] leading-none font-bold text-[#333]">···</button>}
        {p.kind === "unit" && <span className="w-[43px] shrink-0 pl-[5px]">mil</span>}
        {short && <button aria-label="重置" className="flex w-[24px] shrink-0 justify-center text-[#555]"><RotateCw size={15} strokeWidth={1.8} /></button>}
      </div>
    </div>
  );
}

function Head({ t, closed }: { t: string; closed?: boolean }) {
  return (
    <button className="flex h-[33px] w-full items-center gap-[5px] bg-[#ececec] pb-[2px] pl-[9px]">
      <svg width="10" height="10" viewBox="0 0 10 10"><path d={closed ? "M2 0v10l7-5z" : "M10 0v10H0z"} fill="#c4c4c4" /></svg>{t}
    </button>
  );
}

function Properties() {
  return (
    <section className="flex w-[382px] shrink-0 flex-col bg-[#efefef] text-[16px] text-[#444]">
      <div className="flex min-h-0 flex-1">
        <div className="w-[334px] overflow-hidden bg-white">
          <div className="flex h-[41px] items-center justify-between pr-3 pl-[11px]"><span>元件</span><span>选中数量&nbsp; 1</span></div>
          <Head t="位置" />
          <div className="relative pt-1 pb-[5px]">
            <svg width="14" height="7" viewBox="0 0 14 7" className="absolute top-0 left-[156px]"><path d="M0 0h14L7 7z" fill="#c4c4c4" /></svg>
            {place.map((p) => <PropRow key={p.label} p={p} h="h-[43px]" fh="h-[31px]" />)}
          </div>
          <Head t="基础属性" />
          <div className="pt-[3px] pb-[5px]">{basic.map((p) => <PropRow key={p.label} p={p} h="h-[45px]" fh={p.kind === "select" || p.kind === "off" ? "h-[31px]" : "h-[34px]"} />)}</div>
          <Head t="关键属性" />
          <div className="py-[6px]">{keyProps.map((p) => <PropRow key={p.label} p={p} h="h-[45px]" fh="h-[34px]" />)}</div>
          <Head t="更多属性" closed />
          <i className="block h-[11px]" />
          <Head t="组合" />
          <div className="pt-[11px]"><PropRow p={{ label: "", value: "" }} h="h-[34px]" fh="h-[34px]" /></div>
        </div>
        <div className="w-[11px] border-r border-[#ccc] bg-[#efefef]"><div className="h-[923px] rounded-full bg-[#c1c1c1]" /></div>
        <div className="flex flex-1 flex-col pr-[6px]">
          <div className="flex h-[44px] items-center justify-center pb-2 text-black"><G n="pin" size={13} /></div>
          {["图层", "过滤", "属性"].map((t, i) => (
            <button key={t} className={"flex h-[97px] items-center justify-center border-t border-r border-[#ccc] leading-[16px] " + (i === 2 ? "-ml-px bg-white font-bold text-[#2b7de9]" : "")}><span className="w-4 break-all">{t}</span></button>
          ))}
        </div>
      </div>
      <dl className={HUM}>
        {[["S", "2654%", "G", "1, 1mil"], ["X", "1886mil", "dX", "-220mil"], ["Y", "1713mil", "dY", "216mil"]].map((r) => (
          <div key={r[0]} className="flex h-8 items-center border-t border-[#ccc] bg-[#ececec] pb-[2px] pl-[26px]">
            <dt className="w-6">{r[0]}</dt><dd className="w-[146px]">{r[1]}</dd><dt className="w-[22px] text-right">{r[2]}</dt><dd className="ml-[13px]">{r[3]}</dd>
          </div>
        ))}
      </dl>
    </section>
  );
}

function BottomBar() {
  return (
    <footer>
      <div className="h-[8px] bg-[#d0d0d0] bg-[radial-gradient(#b0b0b0_1px,transparent_1px)] bg-[size:5px_4px]" />
      <div className="flex h-[42px] bg-[#f0f0f0] pt-[1px] text-[16px] text-[#444]">
        <div className="flex h-[33px] w-[45px] items-center justify-center pl-[6px] text-black"><G n="pin" size={13} /></div>
        <button className="h-[33px] w-[94px] border-r border-[#ccc] bg-white font-bold text-[#2b7de9]">库</button>
        <button className="flex h-[33px] w-[95px] items-center border-r border-b border-[#ccc] pl-[14px]"><i className="mr-px size-4 rounded-full bg-[#ff1c00]" />日志</button>
        <button className="h-[33px] w-[95px] border-r border-b border-[#ccc]">DRC</button>
        <button className="h-[33px] w-[112px] border-r border-b border-[#ccc]">查找结果</button>
      </div>
      <div className="flex h-[3px] bg-[#333]"><i className="ml-[65px] w-[385px] bg-[#c8c8c8]" /><i className="ml-[281px] w-[214px] bg-[#888]" /></div>
    </footer>
  );
}

export default function App() {
  return (
    <div className={UI + " relative flex h-screen flex-col overflow-hidden border-l border-black bg-[#efefef] leading-normal"}>
      <Browser />
      <MenuBar />
      <Toolbar />
      <div className="flex min-h-0 flex-1 border-t border-[#ccc]">
        <SideTabs />
        <LeftPanel />
        <Splitter dir="l" />
        <Editor />
        <Splitter dir="r" />
        <Properties />
      </div>
      <BottomBar />

      <div className="pointer-events-none absolute top-[52px] left-[66px] z-20 flex items-end leading-none text-white opacity-65">
        <span className="w-[219px] pb-[5px] text-[46px]">立创EDA</span>
        <span className="text-[72px] font-black">bilibili</span>
      </div>

      <p className="absolute bottom-[26px] left-1/2 z-40 h-[97px] -translate-x-1/2 rounded-sm bg-black/40 px-[15px] text-[63px] leading-[107px] whitespace-nowrap text-white">顶层我们通过点击放置填充区域多边形</p>

      <svg width="84" height="84" viewBox="0 0 84 84" className="absolute right-[56px] bottom-[166px] z-20 drop-shadow-md" aria-label="bilibili" role="img">
        <path d="M25 7l9 10M60 7l-9 10" stroke="#fafafa" strokeWidth="8" strokeLinecap="round" />
        <rect x="2" y="14" width="80" height="66" rx="14" fill="#fafafa" />
        <path d="M30 36c0-3 2-4 5-3l21 11c2 1 2 3 0 4L35 60c-3 1-5 0-5-3z" fill="none" stroke="#999" strokeWidth="2.500" />
      </svg>
    </div>
  );
}
